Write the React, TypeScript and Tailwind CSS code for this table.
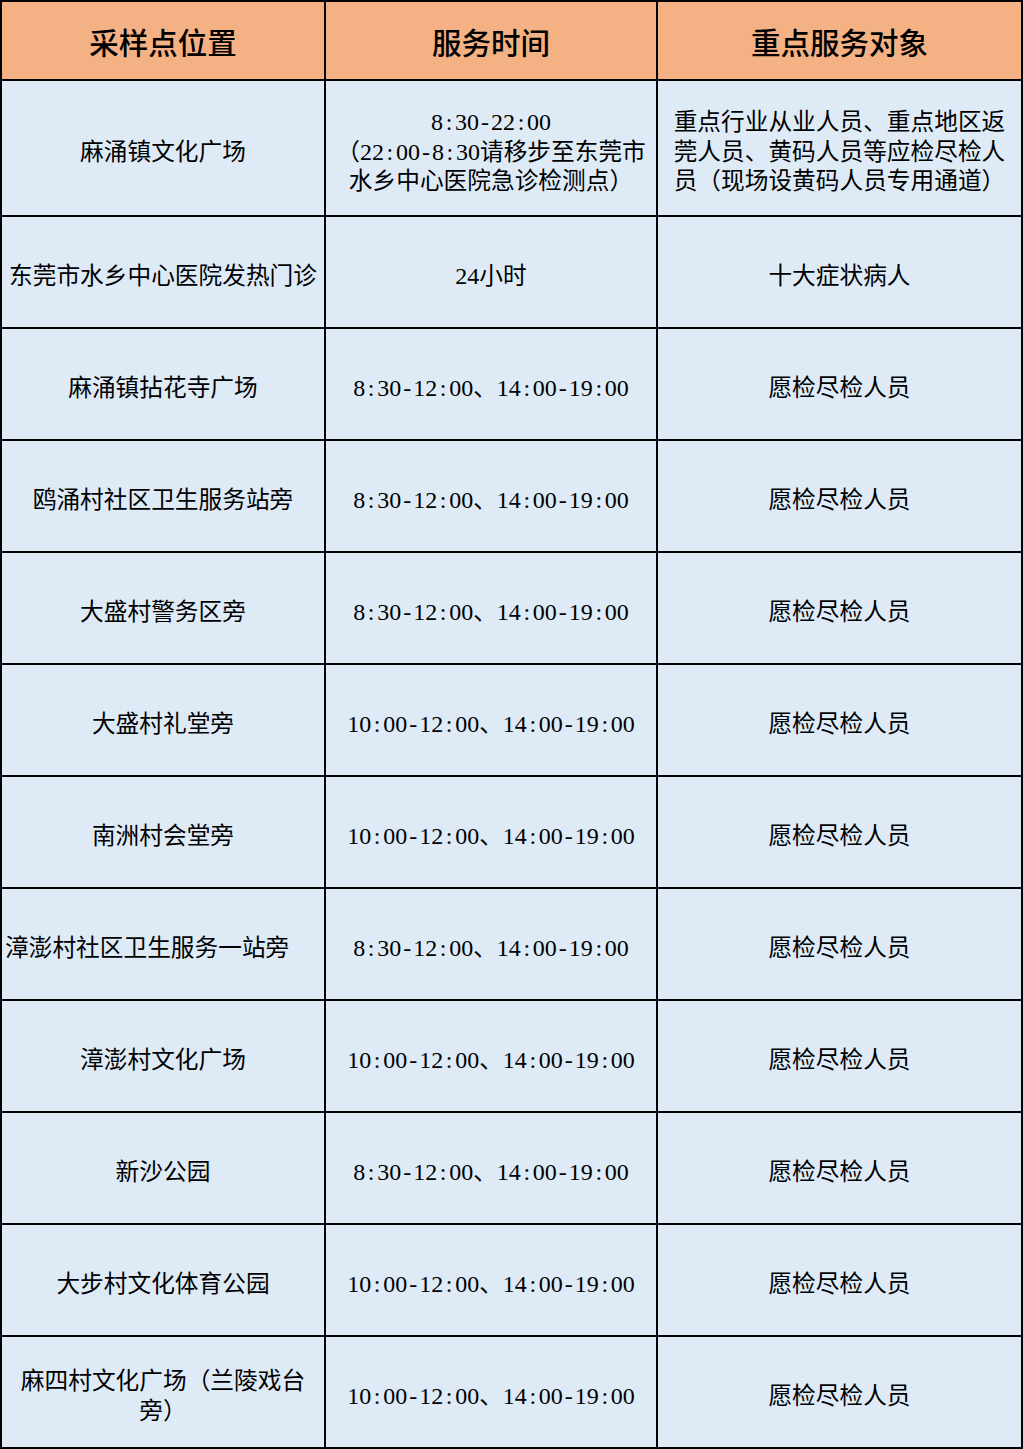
import React from "react";

type Row = { place: string; time: string; target: string; h: string; placeClass?: string };

const rows: Row[] = [
  {
    place: "麻涌镇文化广场",
    time: "8:30-22:00\n（22:00-8:30请移步至东莞市\n水乡中心医院急诊检测点）",
    target: "重点行业从业人员、重点地区返\n莞人员、黄码人员等应检尽检人\n员（现场设黄码人员专用通道）",
    h: "h-[134px]",
  },
  { place: "东莞市水乡中心医院发热门诊", time: "24小时", target: "十大症状病人", h: "h-[110px]" },
  { place: "麻涌镇拈花寺广场", time: "8:30-12:00、14:00-19:00", target: "愿检尽检人员", h: "h-[110px]" },
  { place: "鸥涌村社区卫生服务站旁", time: "8:30-12:00、14:00-19:00", target: "愿检尽检人员", h: "h-[110px]" },
  { place: "大盛村警务区旁", time: "8:30-12:00、14:00-19:00", target: "愿检尽检人员", h: "h-[110px]" },
  { place: "大盛村礼堂旁", time: "10:00-12:00、14:00-19:00", target: "愿检尽检人员", h: "h-[110px]" },
  { place: "南洲村会堂旁", time: "10:00-12:00、14:00-19:00", target: "愿检尽检人员", h: "h-[110px]" },
  {
    place: "漳澎村社区卫生服务一站旁",
    time: "8:30-12:00、14:00-19:00",
    target: "愿检尽检人员",
    h: "h-[110px]",
    placeClass: "justify-start pl-[3px]",
  },
  { place: "漳澎村文化广场", time: "10:00-12:00、14:00-19:00", target: "愿检尽检人员", h: "h-[110px]" },
  { place: "新沙公园", time: "8:30-12:00、14:00-19:00", target: "愿检尽检人员", h: "h-[110px]" },
  { place: "大步村文化体育公园", time: "10:00-12:00、14:00-19:00", target: "愿检尽检人员", h: "h-[110px]" },
  { place: "麻四村文化广场（兰陵戏台\n旁）", time: "10:00-12:00、14:00-19:00", target: "愿检尽检人员", h: "h-[110px]" },
];

// half-width chars sit in fixed 12px boxes, like the sheet's digits
function Txt({ text }: { text: string }) {
  const lines = text.split("\n");
  return (
    <div className="text-center">
      {lines.map((line, i) => (
        <div key={i} className="whitespace-nowrap h-[29.5px] leading-[29.5px]">
          {line.split(/([\x20-\x7e]+)/).map((part, j) =>
            /^[\x20-\x7e]+$/.test(part) ? (
              <span key={j} className="font-['Liberation_Serif',serif] text-[24px]">
                {part.split("").map((ch, k) => (
                  <span key={k} className="inline-block w-[12px] text-center">
                    {ch}
                  </span>
                ))}
              </span>
            ) : (
              <span key={j}>{part}</span>
            )
          )}
        </div>
      ))}
    </div>
  );
}

export default function App() {
  const cell = "flex items-center justify-center bg-[#deebf7] text-black pt-[5px]";
  const head = "flex items-center justify-center bg-[#f4b183] h-[77px] text-[29.5px] font-medium text-black pt-[2px]";
  return (
    <div className="w-[1023px] h-[1449px] bg-black p-[2px] font-['Noto_Sans_CJK_SC',sans-serif] text-[23.7px]">
      <div className="grid grid-cols-[322px_330px_363px] gap-[2px]">
        <div className={head}>采样点位置</div>
        <div className={head}>服务时间</div>
        <div className={head}>重点服务对象</div>
        {rows.map((r, i) => (
          <React.Fragment key={i}>
            <div className={`${cell} ${r.h} ${r.placeClass ?? ""}`}>
              <Txt text={r.place} />
            </div>
            <div className={`${cell} ${r.h}`}>
              <Txt text={r.time} />
            </div>
            <div className={`${cell} ${r.h}`}>
              <Txt text={r.target} />
            </div>
          </React.Fragment>
        ))}
      </div>
    </div>
  );
}
